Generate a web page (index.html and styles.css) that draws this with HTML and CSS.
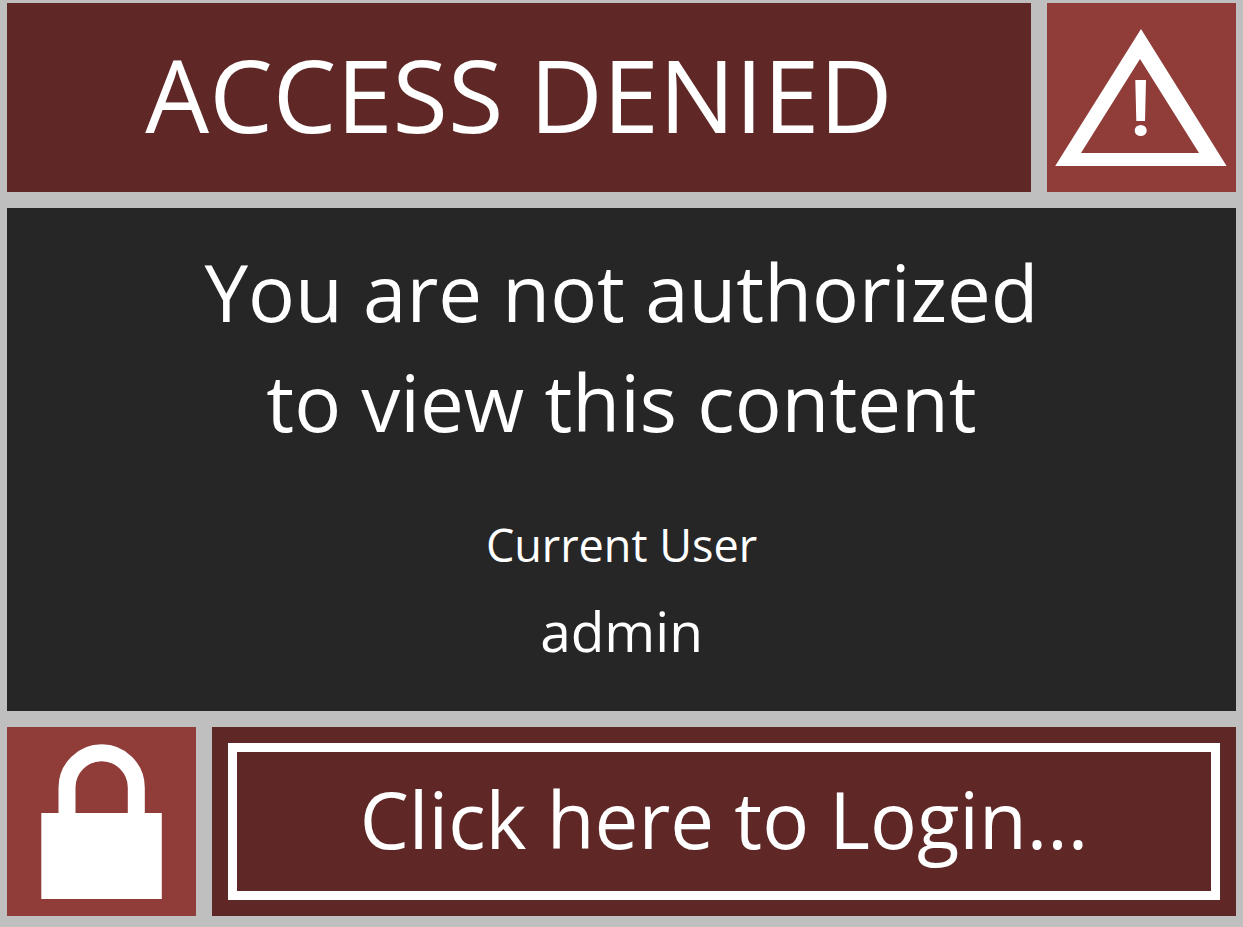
FILE: index.html
```html
<!DOCTYPE html>
<html lang="en">
<head>
    <meta charset="UTF-8">
    <meta name="viewport" content="width=device-width, initial-scale=1.0">
    <title>Access Denied</title>
    <link rel="stylesheet" href="styles.css">
</head>
<body>
    <div class="page">
        <header class="row">
            <div class="banner">
                <h1>ACCESS DENIED</h1>
            </div>
            <!-- Warning sign -->
            <div class="tile">
                <svg viewBox="0 0 189 189" aria-hidden="true">
                    <path fill="#fff" fill-rule="evenodd" d="M94 26 L179.600 163 H8.200 Z M93 56 L34 150 H152 Z"/>
                    <path fill="#fff" d="M88.300 77 H99 L98 118 H89.300 Z"/>
                    <ellipse fill="#fff" cx="93.700" cy="127.500" rx="6" ry="5.500"/>
                </svg>
            </div>
        </header>

        <main class="message">
            <p class="text">You are not authorized<br>to view this content</p>
            <p class="label">Current User</p>
            <p class="user">admin</p>
        </main>

        <footer class="row">
            <!-- Padlock -->
            <div class="tile">
                <svg viewBox="0 0 189 189" aria-hidden="true">
                    <rect fill="#fff" x="34.300" y="86" width="120.500" height="86"/>
                    <path fill="none" stroke="#fff" stroke-width="17" d="M60 88 V60.500 A34.600 34.600 0 0 1 129.300 60.500 V88"/>
                </svg>
            </div>
            <div class="login">
                <button type="button" class="login-button">Click here to Login...</button>
            </div>
        </footer>
    </div>
</body>
</html>
```

FILE: styles.css
```css
* {
    box-sizing: border-box;
}
body {
    margin: 0;
    background-color: #bfbfbf;
    color: white;
    font-family: "Segoe UI", "Open Sans", "Noto Sans", sans-serif;
}
h1, p {
    margin: 0;
    font-weight: normal;
}
.page {
    display: flex;
    flex-direction: column;
    gap: 16px;
    min-height: 100vh;
    padding: 3px 7px 11px;
}
.row {
    display: flex;
    gap: 16px;
}
.banner {
    flex: 1;
    display: flex;
    justify-content: center;
    align-items: center;
    padding-bottom: 8px;
    background-color: #5f2827;
}
h1 {
    font-size: 101px;
    line-height: 120px;
}
.tile {
    flex: none;
    width: 189px;
    height: 189px;
    background-color: #903c39;
}
.tile svg {
    display: block;
    width: 100%;
    height: 100%;
}
.message {
    flex: 1;
    padding: 29px 16px;
    background-color: #262626;
    text-align: center;
}
.text {
    font-size: 78px;
    line-height: 110px;
}
.label {
    margin-top: 52px;
    font-size: 45px;
    line-height: 72px;
}
.user {
    margin-top: 8px;
    font-size: 55px;
    line-height: 84px;
}
.login {
    flex: 1;
    display: flex;
    padding: 16px;
    background-color: #5f2827;
}
.login-button {
    flex: 1;
    padding: 0 0 6px;
    border: 9px solid white;
    background-color: transparent;
    color: white;
    font-family: inherit;
    font-size: 78px;
    line-height: 110px;
    cursor: pointer;
}
```
